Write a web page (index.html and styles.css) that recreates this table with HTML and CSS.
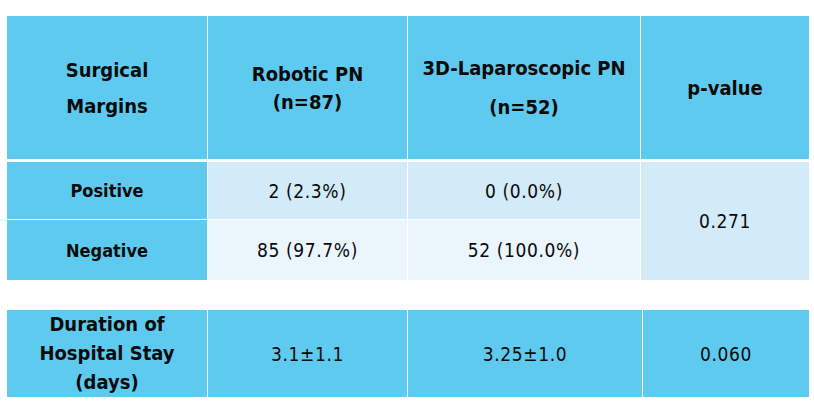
FILE: index.html
```html
<!DOCTYPE html>
<html lang="en">
<head>
<meta charset="utf-8">
<title>Surgical Margins</title>
<link rel="stylesheet" href="styles.css">
</head>
<body>
<main class="page">
  <section class="table margins">
    <div class="head-row">
      <div class="cell head lh-36">Surgical<br>Margins</div>
      <div class="cell head lh-28">Robotic PN<br>(n=87)</div>
      <div class="cell head lh-38">3D-Laparoscopic PN<br>(n=52)</div>
      <div class="cell head">p-value</div>
    </div>
    <div class="body-grid">
      <div class="cell label row-pos">Positive</div>
      <div class="cell value tint-a">2 (2.3%)</div>
      <div class="cell value tint-a">0 (0.0%)</div>
      <div class="cell value tint-a span-2">0.271</div>
      <div class="cell label row-neg">Negative</div>
      <div class="cell value tint-b">85 (97.7%)</div>
      <div class="cell value tint-b">52 (100.0%)</div>
    </div>
  </section>
  <section class="table stay">
    <div class="cell head lh-29">Duration of<br>Hospital Stay<br>(days)</div>
    <div class="cell value blue">3.1±1.1</div>
    <div class="cell value blue">3.25±1.0</div>
    <div class="cell value blue">0.060</div>
  </section>
</main>
</body>
</html>
```

FILE: styles.css
```css
* { box-sizing: border-box; }

html, body {
  margin: 0;
  background: #ffffff;
}

body {
  font-family: "DejaVu Sans Condensed", "DejaVu Sans", sans-serif;
  color: #0a0a0a;
}

.page {
  padding: 16px 0 0 7px;
}

.table {
  width: 802px;
}

.head-row {
  display: grid;
  grid-template-columns: 200px 199px 232px 168px;
  column-gap: 1px;
  height: 143px;
}

.body-grid {
  display: grid;
  grid-template-columns: 200px 199px 232px 168px;
  grid-template-rows: 57px 60px;
  column-gap: 1px;
  row-gap: 1px;
  margin-top: 3px;
}

.stay {
  display: grid;
  grid-template-columns: 200px 199px 234px 166px;
  column-gap: 1px;
  height: 87px;
  margin-top: 30px;
}

.cell {
  display: flex;
  align-items: center;
  justify-content: center;
  text-align: center;
}

.head {
  background: #5ecaef;
  font-weight: bold;
  font-size: 20px;
  line-height: 24px;
}

.lh-36 { line-height: 36px; }
.lh-28 { line-height: 28px; padding-top: 1px; }
.lh-38 { line-height: 38.5px; }
.lh-29 { line-height: 29px; }

.label {
  background: #5ecaef;
  font-weight: bold;
  font-size: 18px;
}

.value {
  font-size: 19px;
  letter-spacing: 0.6px;
}

.tint-a { background: #d3eaf8; }
.tint-b { background: #eaf5fc; }
.blue { background: #5ecaef; }

.span-2 {
  grid-column: 4;
  grid-row: 1 / span 2;
}
```
